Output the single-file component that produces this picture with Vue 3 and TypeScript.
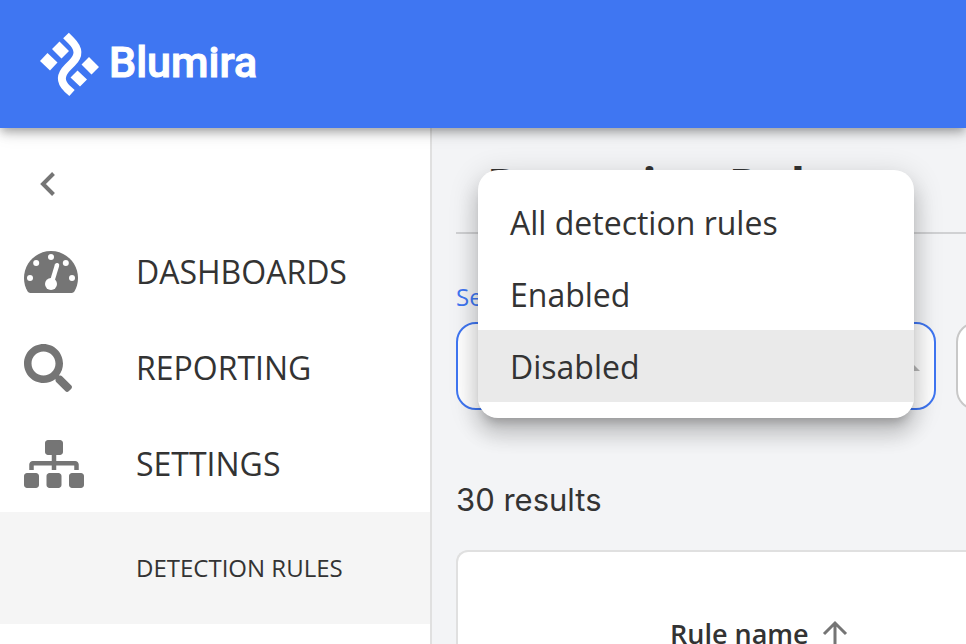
<script setup lang="ts">
import { ref } from 'vue'

const options = ['All detection rules', 'Enabled', 'Disabled']
const selected = ref('Disabled')
const search = ref('')
</script>

<template>
  <div class="app">
    <header class="topbar">
      <a class="brand" href="#" aria-label="Blumira">
        <svg class="mark" viewBox="0 0 60 66" aria-hidden="true">
          <path class="ribbon" d="M26 4.500 L31 9.500 C39.500 18 39.500 24.500 32 32 L28 36 C20 44 20 50.500 27 57.500 L32 62" />
          <path d="M19.500 10.500 L29 20 L21.500 27.500 L12 18Z M7.500 22 L17.500 31.500 L10 39.500 L0 30Z M49 26 L59 36 L51.500 43.500 L41.500 33.500Z M37.500 39.500 L47 48.500 L40 55.500 L30.500 46.500Z" />
        </svg>
        <span class="wordmark">Blumira</span>
      </a>
    </header>
    <div class="body">
      <nav class="sidebar" aria-label="Main">
        <button class="collapse" type="button" aria-label="Collapse menu">
          <svg viewBox="0 0 16 24" aria-hidden="true"><path d="M13.500 1.500 L3 12 L13.500 22.500" /></svg>
        </button>
        <a class="item" href="#">
          <span class="icon">
            <svg class="gauge" viewBox="0 0 576 512" aria-hidden="true">
              <path d="M288 32C129 32 0 161 0 320c0 53 14 102 39 145 6 10 16 15 27 15h444c11 0 21-5 27-15 25-43 39-92 39-145C576 161 447 32 288 32z" />
              <g class="hole">
                <circle cx="288" cy="96" r="32" /><circle cx="130" cy="160" r="32" />
                <circle cx="446" cy="160" r="32" /><circle cx="64" cy="320" r="32" />
                <circle cx="512" cy="320" r="32" /><circle cx="288" cy="384" r="64" />
                <path class="needle" d="M296 370 L352 184" />
              </g>
            </svg>
          </span>DASHBOARDS
        </a>
        <a class="item" href="#">
          <span class="icon">
            <svg class="lens" viewBox="0 0 512 512" aria-hidden="true">
              <path d="M505 442.700L405.300 343c-4.500-4.500-10.600-7-17-7H372c27.600-35.300 44-79.700 44-128C416 93.100 322.900 0 208 0S0 93.100 0 208s93.100 208 208 208c48.300 0 92.700-16.400 128-44v16.300c0 6.400 2.500 12.500 7 17l99.700 99.700c9.400 9.400 24.600 9.400 33.900 0l28.300-28.300c9.400-9.400 9.400-24.600.1-34zM208 336c-70.700 0-128-57.200-128-128 0-70.700 57.200-128 128-128 70.700 0 128 57.200 128 128 0 70.700-57.200 128-128 128z" />
            </svg>
          </span>REPORTING
        </a>
        <a class="item" href="#">
          <span class="icon">
            <svg class="sitemap" viewBox="0 0 640 512" aria-hidden="true">
              <path d="M128 352H32c-17.700 0-32 14.300-32 32v96c0 17.700 14.300 32 32 32h96c17.700 0 32-14.300 32-32v-96c0-17.700-14.300-32-32-32zm-24-80h192v48h48v-48h192v48h48v-57.600c0-21.200-17.200-38.400-38.400-38.400H344v-64h40c17.700 0 32-14.300 32-32V32c0-17.700-14.300-32-32-32H256c-17.700 0-32 14.300-32 32v96c0 17.700 14.300 32 32 32h40v64H94.400C73.200 224 56 241.200 56 262.400V320h48v-48zm264 80h-96c-17.700 0-32 14.300-32 32v96c0 17.700 14.300 32 32 32h96c17.700 0 32-14.300 32-32v-96c0-17.700-14.300-32-32-32zm240 0h-96c-17.700 0-32 14.300-32 32v96c0 17.700 14.300 32 32 32h96c17.700 0 32-14.300 32-32v-96c0-17.700-14.300-32-32-32z" />
            </svg>
          </span>SETTINGS
        </a>
        <a class="subitem" href="#" aria-current="page">DETECTION RULES</a>
      </nav>
      <main class="content">
        <h1>Detection Rules</h1>
        <div class="filters">
          <div class="field">
            <span id="status-label" class="label">Select</span>
            <button class="control active" type="button" aria-haspopup="listbox" aria-expanded="true" aria-labelledby="status-label">
              <svg viewBox="0 0 20 10" aria-hidden="true"><path d="M0 10 L10 0 L20 10Z" /></svg>
            </button>
            <div class="menu" role="listbox" aria-labelledby="status-label">
              <button
                v-for="option in options"
                :key="option"
                class="option"
                :class="{ selected: option === selected }"
                type="button"
                role="option"
                :aria-selected="option === selected"
                @click="selected = option"
              >{{ option }}</button>
            </div>
          </div>
          <div class="field">
            <input v-model="search" class="control" type="text" aria-label="Search" />
          </div>
        </div>
        <p class="results">30 results</p>
        <div class="card">
          <table>
            <thead>
              <tr>
                <th scope="col" aria-sort="ascending">
                  <button class="sort" type="button">
                    Rule name
                    <svg viewBox="0 0 26 28" aria-hidden="true"><path d="M13 28 V3 M2 14 L13 3 L24 14" /></svg>
                  </button>
                </th>
              </tr>
            </thead>
          </table>
        </div>
      </main>
    </div>
  </div>
</template>

<style>
body {
  overflow: hidden;
}
</style>

<style scoped>
.app {
  display: flex;
  flex-direction: column;
  height: 100vh;
  overflow: hidden;
  color: #333;
  font-family: "Open Sans", "Noto Sans", sans-serif;
  font-size: 32px;
  line-height: 48px;
}
.app *,
.app {
  box-sizing: border-box;
}
button,
input {
  margin: 0;
  padding: 0;
  border: 0;
  background: none;
  color: inherit;
  font: inherit;
}
a {
  color: inherit;
  text-decoration: none;
}
svg {
  display: block;
}
.topbar {
  z-index: 1;
  flex: none;
  padding: 32px 40px;
  background: #3f76f2;
  box-shadow: 0 4px 8px -2px rgba(0, 0, 0, 0.2), 0 6px 10px rgba(0, 0, 0, 0.14), 0 2px 20px rgba(0, 0, 0, 0.12);
}
.brand {
  display: flex;
  align-items: center;
  gap: 9px;
  height: 64px;
  color: #fff;
}
.mark {
  width: 60px;
  height: 66px;
  fill: currentColor;
}
.ribbon {
  fill: none;
  stroke: currentColor;
  stroke-width: 8;
}
.wordmark {
  padding-bottom: 4px;
  font-family: Roboto, sans-serif;
  font-size: 43px;
  font-weight: 500;
  -webkit-text-stroke: 1px currentColor;
}
.body {
  display: flex;
  flex: 1;
  min-height: 0;
}
.sidebar {
  display: flex;
  flex: none;
  flex-direction: column;
  width: 432px;
  border-right: 2px solid #e0e0e0;
  background: #fff;
}
.collapse {
  align-self: flex-start;
  padding: 44px 40px 28px;
}
.collapse svg {
  width: 16px;
  height: 24px;
  fill: none;
  stroke: #757575;
  stroke-width: 4;
}
.item {
  display: flex;
  align-items: center;
  height: 96px;
  padding: 0 24px;
}
.icon {
  flex: none;
  width: 112px;
  fill: #757575;
}
.icon svg {
  height: 48px;
}
.hole {
  fill: #fff;
}
.needle {
  stroke: #fff;
  stroke-width: 48;
  stroke-linecap: round;
}
.subitem {
  padding: 32px 24px 32px 136px;
  background: #f5f5f5;
  font-size: 24px;
}
.content {
  flex: 1;
  min-width: 0;
  padding: 24px 0 0 24px;
  background: #f3f4f6;
}
h1 {
  margin: 0;
  padding: 0 31px 16px;
  border-bottom: 2px solid #d0d1d3;
  font-size: 47px;
  font-weight: 700;
  line-height: 64px;
}
.filters {
  display: flex;
  align-items: flex-end;
  gap: 20px;
  padding-top: 42px;
}
.field {
  position: relative;
  flex: none;
  width: 480px;
}
.label {
  display: block;
  padding-bottom: 4px;
  color: #3f76f2;
  font-size: 24px;
  line-height: 42px;
}
.control {
  display: flex;
  align-items: center;
  justify-content: flex-end;
  width: 100%;
  height: 88px;
  padding: 0 14px;
  border: 2px solid #c8c8c8;
  border-radius: 20px;
  background: #fff;
}
.control.active {
  border-color: #3f76f2;
}
.control svg {
  width: 20px;
  height: 10px;
  fill: #b8b8b8;
}
.menu {
  position: absolute;
  z-index: 2;
  right: 22px;
  bottom: -8px;
  left: 22px;
  padding: 16px 0;
  border-radius: 20px;
  background: #fff;
  box-shadow: 0 10px 10px -6px rgba(0, 0, 0, 0.2), 0 16px 20px 2px rgba(0, 0, 0, 0.14), 0 6px 28px 4px rgba(0, 0, 0, 0.12);
}
.option {
  display: block;
  width: 100%;
  padding: 13px 32px 11px;
  text-align: left;
}
.option.selected {
  background: #eaeaea;
}
.results {
  margin: 64px 0 24px;
  font-family: Inter, sans-serif;
  font-size: 31px;
  line-height: 52px;
}
.card {
  padding: 58px 212px;
  border: 2px solid #e0e0e0;
  border-right: 0;
  border-radius: 12px 0 0 12px;
  background: #fff;
}
table {
  border-collapse: collapse;
}
th {
  padding: 0;
  text-align: left;
}
.sort {
  display: flex;
  align-items: center;
  gap: 13px;
  font-size: 27px;
  font-weight: 600;
  white-space: nowrap;
}
.sort svg {
  width: 26px;
  height: 28px;
  fill: none;
  stroke: #757575;
  stroke-width: 3;
}
</style>
